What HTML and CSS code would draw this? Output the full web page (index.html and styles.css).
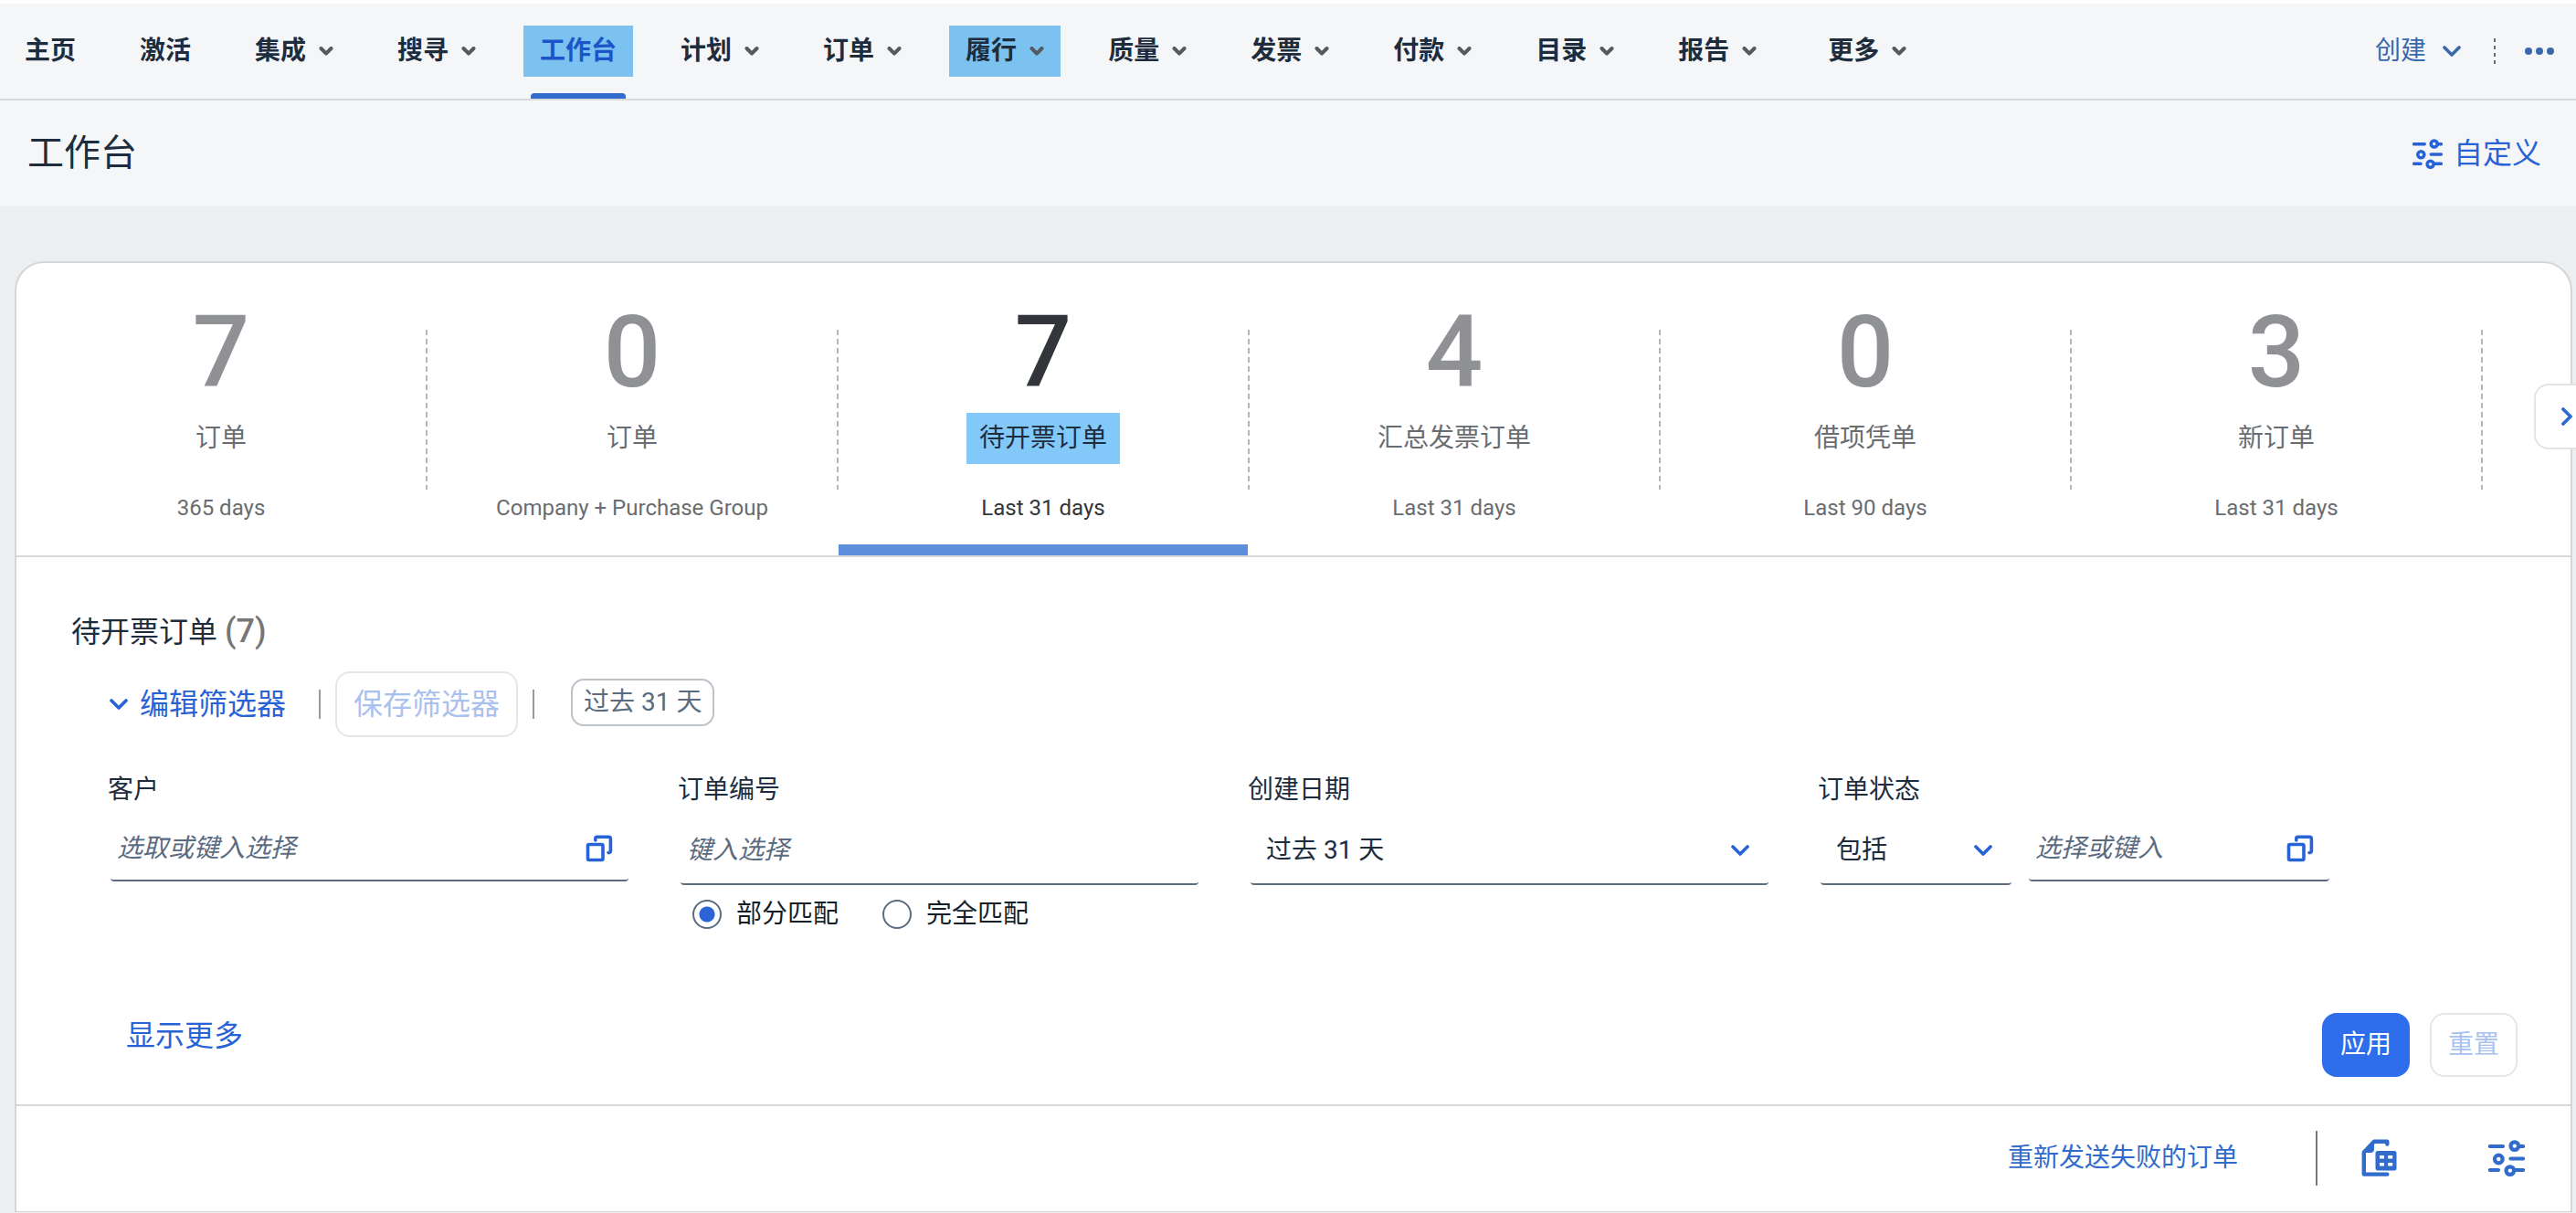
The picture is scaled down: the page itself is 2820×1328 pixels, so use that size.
FILE: index.html
```
<!DOCTYPE html>
<html lang="zh-CN">
  <head>
    <meta charset="UTF-8" />
    <meta name="viewport" content="width=device-width, initial-scale=1">
    <title>工作台</title>
    <link rel="stylesheet" href="styles.css">
  </head>

  <body>

    <!-- shared icons -->
    <svg class="iconDefs" aria-hidden="true">
      <symbol id="chevronDown" viewBox="0 0 20 12">
        <path d="M2 2 L10 10 L18 2" fill="none" stroke="currentColor" stroke-width="3.6" stroke-linecap="round" stroke-linejoin="round"/>
      </symbol>
      <symbol id="navChevron" viewBox="0 0 16 10">
        <path d="M2.5 2 L8 7.6 L13.5 2" fill="none" stroke="currentColor" stroke-width="4" stroke-linecap="round" stroke-linejoin="round"/>
      </symbol>
      <symbol id="sliders" viewBox="0 0 40 40">
        <g fill="none" stroke="currentColor" stroke-width="4.2" stroke-linecap="round">
          <path d="M2 7 H16 M33 7 H38 M24.5 20.5 H38 M2 33 H11 M29 33 H38"/>
          <circle cx="28.8" cy="6.6" r="4.3"/>
          <circle cx="11.3" cy="21" r="4.3"/>
          <circle cx="23.8" cy="33.6" r="4.3"/>
        </g>
      </symbol>
      <symbol id="valueHelp" viewBox="0 0 30 30">
        <g fill="none" stroke="currentColor" stroke-width="3.6" stroke-linejoin="round" stroke-linecap="round">
          <rect x="2.5" y="10.5" width="16.5" height="17" rx="1.5"/>
          <path d="M10.8 6 V4 Q10.8 2.2 12.6 2.2 H25.4 Q27.4 2.2 27.4 4.2 V17.6 Q27.4 19.6 25 19.6"/>
        </g>
      </symbol>
      <symbol id="exportSheet" viewBox="0 0 39 42">
        <path d="M28.3 5.6 V2.8 H14 L2.8 14.5 V38.6 H28.3" fill="none" stroke="currentColor" stroke-width="4.4" stroke-linejoin="round" stroke-linecap="round"/>
        <path d="M14 2 V11 Q14 15 10 15 H3 Z" fill="currentColor"/>
        <rect x="15.5" y="13" width="23" height="21.5" rx="2.5" fill="currentColor"/>
        <path d="M20 18 h5 v3.5 h-5z M29.2 18 h5 v3.5 h-5z M20 26 h5 v3.5 h-5z M29.2 26 h5 v3.5 h-5z" fill="#fff"/>
      </symbol>
    </svg>

    <nav class="navBar">
      <a href="#" class="navItem">主页</a>
      <a href="#" class="navItem">激活</a>
      <button class="navItem">集成<svg class="navArrow"><use href="#navChevron"/></svg></button>
      <button class="navItem">搜寻<svg class="navArrow"><use href="#navChevron"/></svg></button>
      <a href="#" class="navItem current"><span class="marked">工作台</span></a>
      <button class="navItem">计划<svg class="navArrow"><use href="#navChevron"/></svg></button>
      <button class="navItem">订单<svg class="navArrow"><use href="#navChevron"/></svg></button>
      <button class="navItem"><span class="marked">履行<svg class="navArrow"><use href="#navChevron"/></svg></span></button>
      <button class="navItem">质量<svg class="navArrow"><use href="#navChevron"/></svg></button>
      <button class="navItem">发票<svg class="navArrow"><use href="#navChevron"/></svg></button>
      <button class="navItem">付款<svg class="navArrow"><use href="#navChevron"/></svg></button>
      <button class="navItem">目录<svg class="navArrow"><use href="#navChevron"/></svg></button>
      <button class="navItem">报告<svg class="navArrow"><use href="#navChevron"/></svg></button>
      <button class="navItem navMore">更多<svg class="navArrow"><use href="#navChevron"/></svg></button>

      <div class="navTools">
        <button class="createButton">创建<svg class="chevron"><use href="#chevronDown"/></svg></button>
        <span class="toolsDivider"></span>
        <button class="dotsButton" aria-label="更多操作">
          <svg viewBox="0 0 32 8" width="32" height="8" fill="currentColor"><circle cx="4" cy="4" r="4"/><circle cx="16" cy="4" r="4"/><circle cx="28" cy="4" r="4"/></svg>
        </button>
      </div>
    </nav>

    <header class="pageHeader">
      <h1>工作台</h1>
      <button class="linkButton"><svg class="slidersIcon"><use href="#sliders"/></svg>自定义</button>
    </header>

    <main class="card">
      <div class="tiles">
        <button class="tile"><span class="tileCount">7</span><span class="tileName">订单</span><span class="tilePeriod">365 days</span></button>
        <button class="tile"><span class="tileCount">0</span><span class="tileName">订单</span><span class="tilePeriod">Company + Purchase Group</span></button>
        <button class="tile selected"><span class="tileCount">7</span><span class="tileName">待开票订单</span><span class="tilePeriod">Last 31 days</span></button>
        <button class="tile"><span class="tileCount">4</span><span class="tileName">汇总发票订单</span><span class="tilePeriod">Last 31 days</span></button>
        <button class="tile"><span class="tileCount">0</span><span class="tileName">借项凭单</span><span class="tilePeriod">Last 90 days</span></button>
        <button class="tile"><span class="tileCount">3</span><span class="tileName">新订单</span><span class="tilePeriod">Last 31 days</span></button>
        <button class="nextButton" aria-label="下一页">
          <svg viewBox="0 0 12 20" width="12" height="20"><path d="M2 2 L10 10 L2 18" fill="none" stroke="currentColor" stroke-width="3.8" stroke-linecap="round" stroke-linejoin="round"/></svg>
        </button>
      </div>

      <section class="filters">
        <h2>待开票订单 <span class="count">(7)</span></h2>

        <div class="filterBar">
          <button class="linkButton editFilter"><svg class="chevron"><use href="#chevronDown"/></svg>编辑筛选器</button>
          <span class="barDivider"></span>
          <button class="ghostButton saveFilter" disabled>保存筛选器</button>
          <span class="barDivider"></span>
          <span class="chip">过去 31 天</span>
        </div>

        <div class="fields">
          <div class="field">
            <label for="customer">客户</label>
            <div class="inputBox">
              <input type="text" id="customer" placeholder="选取或键入选择" autocomplete="off">
              <button class="helpButton" aria-label="选择客户"><svg><use href="#valueHelp"/></svg></button>
            </div>
          </div>

          <div class="field">
            <label for="orderNumber">订单编号</label>
            <div class="inputBox tall">
              <input type="text" id="orderNumber" placeholder="键入选择" autocomplete="off">
            </div>
            <div class="radios">
              <label><input type="radio" name="match" checked>部分匹配</label>
              <label><input type="radio" name="match">完全匹配</label>
            </div>
          </div>

          <div class="field">
            <label for="created">创建日期</label>
            <div class="inputBox tall selectBox">
              <select id="created"><option>过去 31 天</option></select>
              <svg class="chevron"><use href="#chevronDown"/></svg>
            </div>
          </div>

          <div class="field">
            <label for="status">订单状态</label>
            <div class="statusRow">
              <div class="inputBox tall selectBox">
                <select id="status"><option>包括</option></select>
                <svg class="chevron"><use href="#chevronDown"/></svg>
              </div>
              <div class="inputBox">
                <input type="text" placeholder="选择或键入" aria-label="订单状态" autocomplete="off">
                <button class="helpButton" aria-label="选择状态"><svg><use href="#valueHelp"/></svg></button>
              </div>
            </div>
          </div>
        </div>

        <div class="filterActions">
          <a href="#" class="showMore">显示更多</a>
          <button class="applyButton">应用</button>
          <button class="ghostButton resetButton" disabled>重置</button>
        </div>
      </section>

      <div class="tableTools">
        <a href="#" class="resend">重新发送失败的订单</a>
        <span class="tableDivider"></span>
        <button class="iconButton" aria-label="导出"><svg class="exportIcon"><use href="#exportSheet"/></svg></button>
        <button class="iconButton" aria-label="表格设置"><svg class="settingsIcon"><use href="#sliders"/></svg></button>
      </div>
    </main>

  </body>
</html>
```
FILE: styles.css
```
* {
  box-sizing: border-box;
}

body {
  margin: 0;
  border-top: 4px solid #fff;
  background: #edeef0;
  color: #1d2d3e;
  font-family: Roboto, "Noto Sans CJK SC", sans-serif;
  font-size: 28px;
  line-height: 40px;
}

button, input, select {
  margin: 0;
  padding: 0;
  border: none;
  background: none;
  color: inherit;
  font: inherit;
}

button {
  cursor: pointer;
}

a {
  color: inherit;
  text-decoration: none;
}

svg {
  display: block;
  flex: none;
}

.iconDefs {
  display: none;
}

.chevron {
  width: 20px;
  height: 12px;
}

/*------ top navigation ------*/
.navBar {
  display: flex;
  align-items: stretch;
  gap: 70px;
  height: 106px;
  padding: 0 24px 0 27px;
  background: #f5f6f8;
  border-bottom: 2px solid #d8dadc;
  font-weight: 700;
  white-space: nowrap;
}

.navItem {
  display: flex;
  align-items: center;
}

.navArrow {
  width: 16px;
  height: 10px;
  margin-left: 14px;
  color: #55595e;
}

.marked {
  display: flex;
  align-items: center;
  height: 56px;
  margin: 0 -18px;
  padding: 0 18px;
  background: #7cc2f1;
}

.current {
  position: relative;
  color: #1b55c8;
}

.current:after {
  content: "";
  position: absolute;
  left: -10px;
  right: -10px;
  bottom: 0;
  height: 6px;
  border-radius: 4px 4px 0 0;
  background: #316bcb;
}

.navMore {
  margin-left: 8px;
}

.navTools {
  display: flex;
  align-items: center;
  margin-left: auto;
  color: #3a68ab;
  font-weight: 400;
}

.createButton {
  display: flex;
  align-items: center;
  gap: 18px;
}

.toolsDivider {
  width: 2px;
  height: 28px;
  margin: 0 32px 0 36px;
  background: repeating-linear-gradient(#6a6d70 0 4px, transparent 4px 8px);
}

/*------ page header ------*/
.pageHeader {
  display: flex;
  align-items: center;
  justify-content: space-between;
  height: 116px;
  padding: 0 38px 0 30px;
  background: #f5f6f8;
}

h1 {
  margin: 0;
  font-size: 40px;
  font-weight: 400;
}

.linkButton {
  display: flex;
  align-items: center;
  color: #2763d6;
  font-size: 32px;
}

.slidersIcon {
  width: 33px;
  height: 33px;
  margin-right: 12px;
}

/*------ card with tiles ------*/
.card {
  margin: 60px 4px 0 16px;
  border: 2px solid #d5d6d8;
  border-bottom-width: 1px;
  border-radius: 32px 32px 0 0;
  background: #fff;
}

.tiles {
  position: relative;
  display: flex;
  height: 322px;
  border-bottom: 2px solid #d8d9da;
}

.tile {
  display: flex;
  flex: 0 1 450px;
  flex-direction: column;
  align-items: center;
  justify-content: flex-start;
  padding: 42px 2px 0 0;
  color: #6a6d70;
  background: repeating-linear-gradient(#b4b5b7 0 6px, transparent 6px 10px) right 73px / 2px 175px no-repeat;
}

.tileCount {
  margin-bottom: 10px;
  color: #909195;
  font-size: 110px;
  font-weight: 500;
  line-height: 112px;
}

.tileName {
  margin-bottom: 32px;
  padding: 8px 14px;
}

.tilePeriod {
  font-size: 24px;
  line-height: 32px;
}

.selected {
  position: relative;
  color: #32363b;
}

.selected .tileCount {
  color: #32363b;
}

.selected .tileName {
  background: #82c8f9;
  color: #1d2d3e;
}

.selected:after {
  content: "";
  position: absolute;
  left: 0;
  right: 2px;
  bottom: 0;
  height: 12px;
  background: #5c8edb;
}

.nextButton {
  position: absolute;
  top: 132px;
  right: -6px;
  display: flex;
  align-items: center;
  width: 46px;
  height: 72px;
  padding-left: 28px;
  border: 2px solid #e3e4e6;
  border-right: none;
  border-radius: 16px 0 0 16px;
  background: #fff;
  color: #316bcb;
}

/*------ filters ------*/
.filters {
  padding: 60px 58px 30px 60px;
  border-bottom: 2px solid #d8d9da;
}

h2 {
  margin: 0;
  font-size: 32px;
  font-weight: 400;
  line-height: 44px;
}

.count {
  color: #777;
  font-size: 36px;
  font-weight: 500;
  line-height: 40px;
}

.filterBar {
  display: flex;
  align-items: center;
  margin: 21px 0 38px 42px;
}

.editFilter {
  gap: 13px;
}

.barDivider {
  width: 2px;
  height: 32px;
  margin: 0 16px;
  background: #999;
}

.editFilter + .barDivider {
  margin-left: 36px;
}

.ghostButton {
  border: 2px solid #e5e6e7;
  border-radius: 16px;
  color: #a9c1ef;
}

.saveFilter {
  height: 72px;
  padding: 0 18px;
  font-size: 32px;
}

.chip {
  margin: 0 0 4px 24px;
  padding: 4px 12px;
  border: 2px solid #bcc2c9;
  border-radius: 14px;
  color: #5b6b80;
}

.fields {
  display: grid;
  grid-template-columns: repeat(4, 568px);
  gap: 56px;
  margin-left: 42px;
}

.field > label {
  display: block;
  margin-left: -2px;
}

.inputBox {
  display: flex;
  align-items: center;
  height: 78px;
  margin-top: 2px;
  margin-left: 1px;
  padding: 7px 17px 0 7px;
  border-bottom: 2px solid #5b6b80;
  border-radius: 4px;
}

.tall {
  height: 82px;
}

.inputBox input {
  flex: 1;
  min-width: 0;
  outline: none;
}

.inputBox input::placeholder {
  color: #5b6b80;
  font-style: italic;
  opacity: 1;
}

.helpButton {
  color: #2763d6;
}

.helpButton svg {
  width: 30px;
  height: 30px;
}

.selectBox {
  position: relative;
  padding: 7px 0 0;
}

.selectBox select {
  width: 100%;
  height: 100%;
  padding: 0 20px 0 17px;
  appearance: none;
  outline: none;
}

.selectBox .chevron {
  position: absolute;
  right: 21px;
  top: 38px;
  color: #2763d6;
  pointer-events: none;
}

.statusRow {
  display: grid;
  grid-template-columns: 210px 330px;
  align-items: start;
  gap: 18px;
}

.radios {
  display: flex;
  gap: 48px;
  margin: 12px 0 0 14px;
  color: #131e29;
}

.radios label {
  display: flex;
  align-items: center;
  gap: 16px;
}

.radios input {
  width: 32px;
  height: 32px;
  border: 2px solid #5b6b80;
  border-radius: 50%;
  appearance: none;
}

.radios input:checked {
  background: radial-gradient(#2a64d6 8px, #fff 9px);
}

.filterActions {
  display: flex;
  align-items: center;
  gap: 22px;
  margin-top: 88px;
}

.showMore {
  margin: 0 auto 20px 60px;
  color: #2763d6;
  font-size: 32px;
}

.applyButton, .resetButton {
  width: 96px;
  height: 70px;
}

.applyButton {
  border-radius: 16px;
  background: #2f6eea;
  color: #fff;
}

/*------ table toolbar ------*/
.tableTools {
  display: flex;
  align-items: center;
  justify-content: flex-end;
  height: 115px;
  padding: 0 50px 2px 0;
  color: #316bcb;
}

.tableDivider {
  width: 2px;
  height: 60px;
  margin: 0 48px 0 85px;
  background: #767676;
}

.iconButton + .iconButton {
  margin-left: 100px;
}

.exportIcon {
  width: 39px;
  height: 42px;
}

.settingsIcon {
  width: 40px;
  height: 40px;
}
```
